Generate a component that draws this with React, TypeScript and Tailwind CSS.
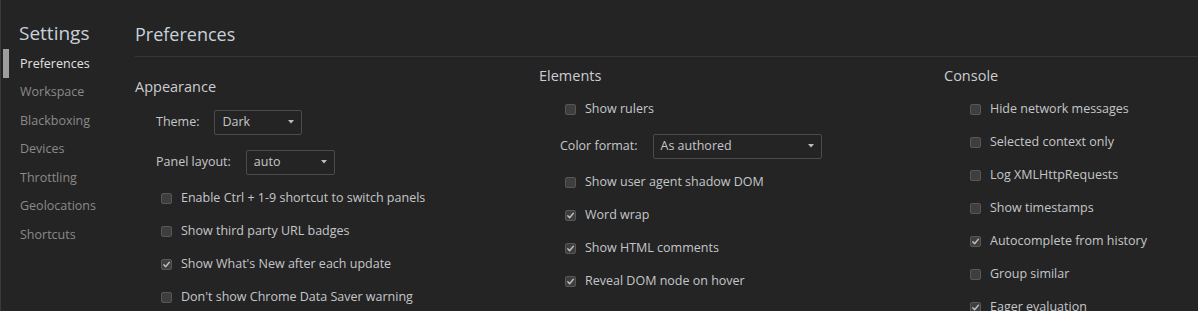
import React from 'react';

const font = { fontFamily: '"Open Sans", "Noto Sans", sans-serif' };

const navItems = ['Preferences', 'Workspace', 'Blackboxing', 'Devices', 'Throttling', 'Geolocations', 'Shortcuts'];

function Checkbox({ checked }: { checked?: boolean }) {
  return (
    <span className="w-[11px] h-[11px] rounded-[2px] bg-[#3e3e3e] border border-[#575757] flex items-center justify-center shrink-0">
      {checked && (
        <svg className="w-[9px] h-[9px]" viewBox="0 0 10 10" fill="none">
          <path d="M2 5.2l2 2.2L8.2 2.5" stroke="#bdbdbd" strokeWidth={1.6} strokeLinecap="round" strokeLinejoin="round" />
        </svg>
      )}
    </span>
  );
}

function CheckRow({ label, checked }: { label: string; checked?: boolean }) {
  return (
    <div className="h-[33px] flex items-center pl-[26px] gap-[9px] text-[12.5px] text-[#c4c7ca]">
      <Checkbox checked={checked} />
      <span>{label}</span>
    </div>
  );
}

function SelectRow({ label, value, width }: { label: string; value: string; width: string }) {
  return (
    <div className="h-[40px] flex items-center pl-[21px] text-[12.5px] text-[#c4c7ca]">
      <span className="mr-[15px]">{label}</span>
      <div className={`${width} h-[25px] border border-[#4b4b4b] rounded-[2px] flex items-center justify-between pl-[7px] pr-[7px]`}>
        <span>{value}</span>
        <svg className="w-[6px] h-[4px]" viewBox="0 0 6 4">
          <path d="M0 0h6L3 3.5z" fill="#bdbdbd" />
        </svg>
      </div>
    </div>
  );
}

function SectionTitle({ children }: { children: React.ReactNode }) {
  return <div className="h-[22px] leading-[22px] text-[14.5px] text-[#cbcdd0]">{children}</div>;
}

export default function App() {
  return (
    <div className="flex h-[311px] w-full bg-[#242424] overflow-hidden border-l border-[#3a3a3a]" style={font}>
      {/* Sidebar */}
      <div className="w-[134px] shrink-0 pt-[19px]">
        <div className="h-[30px] leading-[29px] pl-[18px] text-[19px] text-[#c8d1da]">Settings</div>
        {navItems.map((item, i) => (
          <div key={item} className="relative h-[28.5px] flex items-center pl-[19px] pt-[2px] text-[12.5px]">
            {i === 0 && <span className="absolute left-[2px] top-0 w-[6px] h-[29px] bg-[#9e9e9e]" />}
            <span className={i === 0 ? 'text-[#e2e2e2]' : 'text-[#8a8a8a]'}>{item}</span>
          </div>
        ))}
      </div>

      {/* Main */}
      <div className="flex-1 min-w-0">
        <div className="h-[57px] border-b border-[#363636] pt-[22px]">
          <div className="leading-[24px] text-[18px] text-[#c8d1da]">Preferences</div>
        </div>

        <div className="flex">
          {/* Appearance */}
          <div className="w-[404px] shrink-0 pt-[19px]">
            <div className="mb-[4px]"><SectionTitle>Appearance</SectionTitle></div>
            <SelectRow label="Theme:" value="Dark" width="w-[88px]" />
            <SelectRow label="Panel layout:" value="auto" width="w-[89px]" />
            <CheckRow label="Enable Ctrl + 1-9 shortcut to switch panels" />
            <CheckRow label="Show third party URL badges" />
            <CheckRow label="Show What's New after each update" checked />
            <CheckRow label="Don't show Chrome Data Saver warning" />
          </div>

          {/* Elements */}
          <div className="w-[405px] shrink-0 pt-[8px]">
            <div className="mb-[6px]"><SectionTitle>Elements</SectionTitle></div>
            <CheckRow label="Show rulers" />
            <SelectRow label="Color format:" value="As authored" width="w-[169px]" />
            <CheckRow label="Show user agent shadow DOM" />
            <CheckRow label="Word wrap" checked />
            <CheckRow label="Show HTML comments" checked />
            <CheckRow label="Reveal DOM node on hover" checked />
          </div>

          {/* Console */}
          <div className="flex-1 pt-[8px]">
            <div className="mb-[6px]"><SectionTitle>Console</SectionTitle></div>
            <CheckRow label="Hide network messages" />
            <CheckRow label="Selected context only" />
            <CheckRow label="Log XMLHttpRequests" />
            <CheckRow label="Show timestamps" />
            <CheckRow label="Autocomplete from history" checked />
            <CheckRow label="Group similar" />
            <CheckRow label="Eager evaluation" checked />
          </div>
        </div>
      </div>
    </div>
  );
}
